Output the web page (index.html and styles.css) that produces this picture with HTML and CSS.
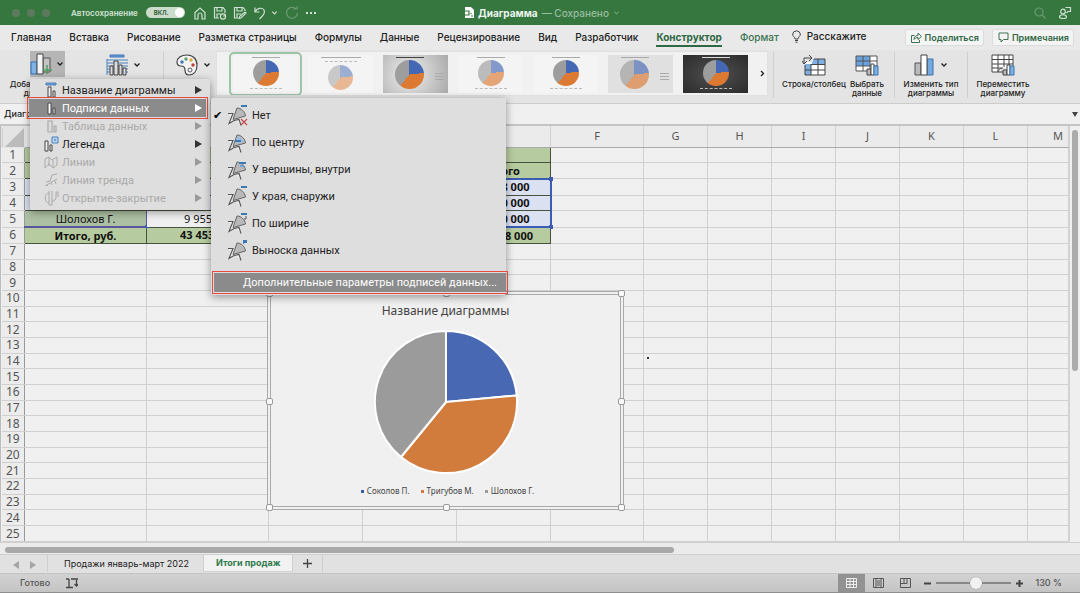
FILE: index.html
```html
<!DOCTYPE html>
<html lang="ru">
<head>
<meta charset="utf-8">
<title>Диаграмма</title>
<link rel="stylesheet" href="styles.css">
</head>
<body>
<svg class="defs" width="0" height="0" aria-hidden="true">
  <symbol id="chev" viewBox="0 0 8 6"><path d="M1.500 1.500 4 4l2.500-2.500" fill="none" stroke="currentColor" stroke-width="1.300"/></symbol>
  <symbol id="wedge" viewBox="0 0 24 24">
    <path d="M2 9.500h5l-2 5-2 5 5-3 5-1 2 6" fill="#eee" stroke="#555" stroke-width="1.100"/>
    <path d="M7 15.500 11 4c4 0 8 3.500 8.500 8Z" fill="#b9b9bb" stroke="#666" stroke-width="1"/>
  </symbol>
  <symbol id="bars" viewBox="0 0 16 16"><path d="M4 3h4v11H4zM10 8h2v6h-2z" fill="none" stroke="currentColor" stroke-width="1.200"/></symbol>
</svg>

<header class="titlebar">
  <div class="lights"><i></i><i></i><i></i></div>
  <span class="autosave">Автосохранение</span>
  <button class="toggle" aria-label="Автосохранение">ВКЛ.<i></i></button>
  <div class="quick">
    <button aria-label="Домой"><svg width="14" height="14" viewBox="0 0 14 14"><path d="M2 6.500 7 2l5 4.500V13H9V9a2 2 0 0 0-4 0v4H2Z"/></svg></button>
    <button aria-label="Сохранить"><svg width="14" height="14" viewBox="0 0 14 14"><path d="M6 12H1.500V1.500H10L12 4v3M4 1.500V5h5V1.500M4 12V8h4"/><circle cx="10" cy="10.500" r="2.600"/><path d="M12 8v2h-2"/></svg></button>
    <button aria-label="Сохранить как"><svg width="14" height="14" viewBox="0 0 14 14"><path d="M5 12H1.500V1.500H10L12 4v1M4 1.500V5h5V1.500M4 12V8h4M6 12.500l1-2.500 5-4 1 1-5 5Z"/></svg></button>
    <button aria-label="Отменить"><svg width="14" height="14" viewBox="0 0 14 14"><path d="M2 1.500V6h4.500M2 6c2-4 7-5 9-2 2 4-2 6-4.500 9"/></svg></button>
    <button class="small" aria-label="Список отмены"><svg width="7" height="6"><use href="#chev"/></svg></button>
    <button class="dim" aria-label="Повторить"><svg width="14" height="14" viewBox="0 0 14 14"><path d="M11 3a5.500 5.500 0 1 0 1.500 4M8.500 3H12V0"/></svg></button>
    <button aria-label="Ещё"><svg width="12" height="4" viewBox="0 0 12 4"><path d="M1 2h2M5 2h2M9 2h2" stroke-width="2"/></svg></button>
  </div>
  <div class="doc">
    <svg width="9" height="11" viewBox="0 0 9 11"><path d="M0 0h6l3 3v8H0z" fill="#fff" stroke="none"/><path d="M0 4h4v4H0M6 6v1M6 9h2" stroke="#35773f" fill="none"/></svg>
    <b>Диаграмма</b><span>— Сохранено</span><svg class="dim" width="7" height="6"><use href="#chev"/></svg>
  </div>
  <div class="right-icons">
    <svg class="dim" width="12" height="12" viewBox="0 0 12 12"><circle cx="5" cy="5" r="4"/><path d="m8 8 3.500 3.500"/></svg>
    <svg width="14" height="14" viewBox="0 0 14 14"><circle cx="5" cy="5.500" r="2.300"/><path d="M1.500 11c0-3 7-3 7 0 0 2-7 2-7 0M7.500 1.500h5v4h-2.500l-1.500 1.500"/></svg>
  </div>
</header>

<nav class="tabs">
  <a href="#">Главная</a><a href="#">Вставка</a><a href="#">Рисование</a><a href="#">Разметка страницы</a><a href="#">Формулы</a><a href="#">Данные</a><a href="#">Рецензирование</a><a href="#">Вид</a><a href="#">Разработчик</a><a href="#" class="active">Конструктор</a><a href="#" class="green">Формат</a>
  <a href="#" class="tell"><svg width="9" height="13" viewBox="0 0 9 13"><path d="M3 9c0-2-2.400-2.500-2.400-5a4 4 0 0 1 7.800 0C8.400 6.500 6 7 6 9ZM3 10.500h3M3.500 12.200h2" fill="none" stroke="#444"/></svg>Расскажите</a>
  <div class="share">
    <button><svg width="11" height="11" viewBox="0 0 11 11"><path d="M3.500 3.500h-3v7h8V8M3 7.500c0-3 2-4 4-4V1l3.500 3.500L7 7.500v-2C5.500 5.500 4 6 3 7.500Z"/></svg>Поделиться</button>
    <button><svg width="11" height="11" viewBox="0 0 11 11"><path d="M1 1h9v6.500H5.500L3 10V7.500H1Z"/></svg>Примечания</button>
  </div>
</nav>

<section class="ribbon">
  <button class="tool add"><span class="pic pressed"><svg width="22" height="23" viewBox="0 0 22 23"><path d="M1 9h6v12H1z" fill="#7fb2e5" stroke="#346fae"/><path d="M13 5h7v14h-7z" fill="#c4c4c4" stroke="#555"/><path d="M7 1h6v20H7z" fill="#f4f4f4" stroke="#444"/><path d="M17 12v9M13 17h9" stroke="#4e9d62" stroke-width="1.500"/></svg><svg width="8" height="6"><use href="#chev"/></svg></span>Добавить элемент<br>диаграммы</button>
  <button class="tool layout" aria-label="Экспресс-макет"><span class="pic"><svg width="22" height="22" viewBox="0 0 22 22"><path d="M4 1h14v2H4z" fill="#6ea3dc" stroke="#3b73b5"/><path d="M1 5v16M1 6h21M1 9h21M1 12h21M1 15h21M1 18h21" stroke="#4b82bd"/><path d="M4 12h3v9H4zM8 7h4v14H8zM13 11h3v10h-3zM17 14h3v7h-3z" fill="#ddd" stroke="#444"/></svg><svg width="8" height="6"><use href="#chev"/></svg></span></button>
  <hr>
  <button class="tool colors" aria-label="Изменить цвета"><span class="pic"><svg width="22" height="22" viewBox="0 0 22 22"><path d="M11 1C5 1 1 4 1 8c0 3 2 4 4 4 3 0 4 1 4 4 0 3 1 5 4 5 5 0 8-4 8-10C21 5 17 1 11 1Z" fill="#f3f3f3" stroke="#444" stroke-width="1.200"/><circle cx="6" cy="8" r="1.700" fill="#3f75b5"/><circle cx="10" cy="5" r="1.700" fill="#58a36b"/><circle cx="15" cy="6" r="1.700" fill="#e0a93b"/><circle cx="17" cy="11" r="1.700" fill="#c33b3b"/><circle cx="14" cy="16" r="2" fill="#fff" stroke="#555"/></svg><svg width="8" height="6"><use href="#chev"/></svg></span></button>
  <div class="gallery">
    <button class="thumb chosen" aria-label="Стиль 1"><i class="cap"></i><i class="pie"></i><i class="key"></i></button>
    <button class="thumb pale low" aria-label="Стиль 2"><i class="cap wide"></i><i class="key"></i><i class="pie"></i></button>
    <button class="thumb grad side" aria-label="Стиль 3"><i class="cap"></i><i class="pie big"></i></button>
    <button class="thumb soft" aria-label="Стиль 4"><i class="cap"></i><i class="pie"></i><i class="key"></i></button>
    <button class="thumb" aria-label="Стиль 5"><i class="cap"></i><i class="pie"></i><i class="key"></i></button>
    <button class="thumb soft shade side" aria-label="Стиль 6"><i class="cap"></i><i class="pie big"></i></button>
    <button class="thumb dark" aria-label="Стиль 7"><i class="cap"></i><i class="pie"></i><i class="key"></i></button>
    <button class="more" aria-label="Далее"><svg width="5" height="7" viewBox="0 0 5 7"><path d="m1 1 2.500 2.500L1 6" fill="none" stroke="#222" stroke-width="1.300"/></svg></button>
  </div>
  <hr class="after-gallery">
  <button class="tool swap"><span class="pic"><svg width="24" height="22" viewBox="0 0 24 22"><path d="M3 5h20v16H3z" fill="#fff"/><path d="M10 5h13v5H10zM3 10h6v11H3z" fill="#7eb0e3"/><path d="M12 5h11v16H3V11M3 16h20M9 10v11M16 5v16M9 10.500h14" fill="none" stroke="#444"/><path d="M0 0h11v8H0z" fill="#e4e4e4"/><path d="M2 9V4h8M7 1l3 3-3 3M0 7l2 3 3-3" fill="none" stroke="#444"/></svg></span>Строка/столбец</button>
  <button class="tool pick"><span class="pic"><svg width="24" height="22" viewBox="0 0 24 22"><path d="M1 2h21v15H1z" fill="#fff"/><path d="M1 2h14v10H1z" fill="#69a2df"/><path d="M1 2h21v15H1zM1 7h21M1 12h21M8 2v15M15 2v15" fill="none" stroke="#555"/><path d="M12 15h4v6h-4z" fill="#bbb" stroke="#444"/><path d="M16 10h3v11h-3z" fill="#fff" stroke="#444"/><path d="M19 12h4v9h-4z" fill="#7eb0e3" stroke="#3972ae"/></svg></span>Выбрать<br>данные</button>
  <hr>
  <button class="tool type"><span class="pic"><svg width="21" height="22" viewBox="0 0 21 22"><path d="M1 9h6v12H1z" fill="#bbb" stroke="#555"/><path d="M13 5h6v16h-6z" fill="#76aae0" stroke="#3972ae"/><path d="M7 1h6v20H7z" fill="#fff" stroke="#444"/></svg><svg width="8" height="6"><use href="#chev"/></svg></span>Изменить тип<br>диаграммы</button>
  <hr>
  <button class="tool move"><span class="pic"><svg width="24" height="22" viewBox="0 0 24 22"><path d="M1 1h21v13H12l-4 4H1z" fill="#fff"/><path d="M12 18H1V1h21v11M1 5.500h21M1 10h21M1 14h11M7 1v17M13 1v12M18 1v11M7 18c1-3 3-4 4-3" fill="none" stroke="#444"/><path d="M12 16h4v5h-4z" fill="#bbb" stroke="#444"/><path d="M16 11h3v10h-3z" fill="#fff" stroke="#444"/><path d="M19 12h4v9h-4z" fill="#7eb0e3" stroke="#3972ae"/></svg></span>Переместить<br>диаграмму</button>
</section>

<div class="formula"><span>Диагр</span><i></i></div>

<main class="sheet">
  <table id="grid"></table>
  <div class="vscroll"><i></i></div>
  <figure class="chart">
    <i class="h n w"></i><i class="h n c"></i><i class="h n e"></i><i class="h m w"></i><i class="h m e"></i><i class="h s w"></i><i class="h s c"></i><i class="h s e"></i>
    <figcaption>Название диаграммы</figcaption>
    <svg width="144" height="144" viewBox="-72 -72 144 144" stroke="#fff" stroke-width="2" stroke-linejoin="round">
      <path d="M0 0V-71A71 71 0 0 1 70.700-6.500Z" fill="#4868b3"/>
      <path d="M0 0 70.700-6.500A71 71 0 0 1-45 55Z" fill="#d17b3c"/>
      <path d="M0 0-45 55A71 71 0 0 1 0-71Z" fill="#9b9b9b"/>
    </svg>
    <ul><li class="k1">Соколов П.</li><li class="k2">Тригубов М.</li><li class="k3">Шолохов Г.</li></ul>
  </figure>
  <i class="speck"></i>
</main>

<div class="hscroll"><i></i></div>
<nav class="sheets">
  <button class="arrow prev" aria-label="Назад"></button><button class="arrow next" aria-label="Вперёд"></button>
  <button class="stab">Продажи январь-март 2022</button>
  <button class="stab on">Итоги продаж</button>
  <button class="plus" aria-label="Добавить лист"><svg width="9" height="9" viewBox="0 0 9 9"><path d="M4.500 0v9M0 4.500h9" stroke="#444" stroke-width="1.300"/></svg></button>
</nav>
<footer class="status">
  <span class="ready">Готово</span>
  <svg width="12" height="11" viewBox="0 0 12 11"><path d="M0 1h3M5 1h7M3 1v8M0 9.500h7M10.500 2v5M8.500 6l2 2 2-2" fill="none" stroke="#444" stroke-width="1.300"/></svg>
  <div class="views">
    <button class="on" aria-label="Обычный"><svg width="11" height="10" viewBox="0 0 11 10"><path d="M.5.5h10v9H.5zM.5 3.500h10M.5 6.500h10M4 .5v9M7.500.5v9"/></svg></button>
    <button aria-label="Разметка"><svg width="11" height="10" viewBox="0 0 11 10"><path d="M.5.5h10v9H.5zM3 .5v9M8 .5v9M4 3h3M4 5h3M4 7h3"/></svg></button>
    <button aria-label="Страничный"><svg width="11" height="10" viewBox="0 0 11 10"><path d="M.5.5h10v9H.5zM.5 5.500H7V.5M4 .5v5"/></svg></button>
  </div>
  <button class="zoom" aria-label="Уменьшить"><svg width="7" height="7" viewBox="0 0 7 7"><path d="M0 3.500h7"/></svg></button>
  <input type="range" min="0" max="100" value="54" aria-label="Масштаб">
  <button class="zoom" aria-label="Увеличить"><svg width="7" height="7" viewBox="0 0 7 7"><path d="M0 3.500h7M3.500 0v7"/></svg></button>
  <span class="percent">130 %</span>
</footer>

<div class="menu main-menu" role="menu">
  <button role="menuitem"><svg width="16" height="16" viewBox="0 0 16 16"><path d="M2 1h10v2H2z" fill="#75a5dc" stroke="#4d7fb9"/><path d="M4 5h3v10H4zM9 9h2v6H9z" fill="#eee" stroke="#444"/></svg>Название диаграммы</button>
  <button role="menuitem" class="hot"><svg width="16" height="16" viewBox="0 0 16 16"><path d="M4 3h3v11H4z" fill="#fff" stroke="#444"/><path d="M9 8h2v6H9z" fill="#eee" stroke="#444"/></svg>Подписи данных</button>
  <button role="menuitem" disabled><svg width="16" height="16"><use href="#bars"/></svg>Таблица данных</button>
  <button role="menuitem"><svg width="16" height="16" viewBox="0 0 16 16"><path d="M1 5h3v10H1zM6 9h2v6H6z" fill="#eee" stroke="#444"/><path d="M8 1h6v6H8z" fill="#b7d3ef" stroke="#4a82bd"/><path d="M10 4h2" stroke="#346fae"/></svg>Легенда</button>
  <button role="menuitem" disabled><svg width="16" height="16" viewBox="0 0 16 16"><path d="M1 14V5l4-2 3 3 5-3v8l-4 3-4-4-4 4M5 3v9M9 6v7" fill="none" stroke="currentColor"/></svg>Линии</button>
  <button role="menuitem" disabled><svg width="16" height="16" viewBox="0 0 16 16"><path d="M1 14 13 7M2 10l4-1 2-6 5-1M3 13l1 1M7 11l1 2M11 9l1 3" fill="none" stroke="currentColor"/></svg>Линия тренда</button>
  <button role="menuitem" disabled><svg width="16" height="16" viewBox="0 0 16 16"><path d="M5 3C0 3 0 13 5 13M5 1v14h3V1M8 12l4-3V2h2v5" fill="none" stroke="currentColor"/></svg>Открытие-закрытие</button>
</div>

<div class="menu sub-menu" role="menu">
  <button role="menuitem" class="checked"><svg width="24" height="24"><use href="#wedge"/><path d="M15 2h6" stroke="#3c79b3" stroke-width="2"/><path d="m15 15 6 6m0-6-6 6" stroke="#c64a50" stroke-width="1.200"/></svg>Нет</button>
  <button role="menuitem"><svg width="24" height="24"><use href="#wedge"/><path d="m9 12 2-6c4 0 6 2 7 5Z" fill="#9dc0e2"/><path d="M9 10h6" stroke="#3c79b3" stroke-width="2"/></svg>По центру</button>
  <button role="menuitem"><svg width="24" height="24"><use href="#wedge"/><path d="M13 5h7" stroke="#3c79b3" stroke-width="2"/><path d="M14 8h4" stroke="#6e9ecb" stroke-width="2"/></svg>У вершины, внутри</button>
  <button role="menuitem"><svg width="24" height="24"><use href="#wedge"/><path d="M15 2h6" stroke="#3c79b3" stroke-width="2"/></svg>У края, снаружи</button>
  <button role="menuitem"><svg width="24" height="24"><use href="#wedge"/><path d="M15 2h6" stroke="#3c79b3" stroke-width="2"/><path d="M20 4v3h-2" fill="none" stroke="#555"/></svg>По ширине</button>
  <button role="menuitem"><svg width="24" height="24"><use href="#wedge"/><path d="M17 1h4v3h-2l-2 1Z" fill="#3c79b3"/></svg>Выноска данных</button>
  <button role="menuitem" class="hot">Дополнительные параметры подписей данных...</button>
</div>
<script src="grid.js"></script>
</body>
</html>
```

FILE: grid.js
```js
const columns = ["", "", "", "", "", "F", "G", "H", "I", "J", "K", "L", "M"];
const cells = {
  "2-4": "Итого", "3-4": "8 000", "4-4": "0 000", "5-4": "0 000", "6-4": "8 000",
  "5-0": "Шолохов Г.", "5-1": "9 955", "6-0": "Итого, руб.", "6-1": "43 453"
};
const widths = [23, 122, 122, 94, 94, 94, 93, 64, 64, 64, 64, 64, 64];
let html = "<colgroup>" + widths.map(w => `<col style="width:${w}px">`).join("") + "<col></colgroup>";
html += "<thead><tr><th class='corner'></th>" + columns.map(c => `<th>${c}</th>`).join("") + "</tr></thead><tbody>";
for (let r = 1; r <= 25; r++) {
  html += `<tr class="r${r}"><th>${r}</th>`;
  columns.forEach((_, c) => {
    const data = r <= 6 && c <= 4 ? ` data c${c}` : "";
    html += `<td class="cell${data}">${cells[r + "-" + c] || ""}</td>`;
  });
  html += "</tr>";
}
document.getElementById("grid").innerHTML = html + "</tbody>";
for (const [selector, name] of [[".r5 .c0", "bottom"], [".r5 .c4", "bottom"], [".r3 .c4", "top"]]) {
  const mark = document.createElement("i");
  mark.className = "mark " + name;
  document.querySelector(selector).append(mark);
}
```

FILE: styles.css
```css
* { box-sizing: border-box; }
body {
  margin: 0;
  min-height: 100vh;
  display: flex;
  flex-direction: column;
  position: relative;
  overflow: hidden;
  background: #e6e6e6;
  color: #222;
  font: 500 10px/12px Inter, "Liberation Sans", sans-serif;
}
button { font: inherit; color: inherit; border: 0; background: none; padding: 0; margin: 0; }
a { color: inherit; text-decoration: none; }
svg { flex: none; }
.defs { position: absolute; }

.titlebar {
  height: 25px;
  background: #35773f;
  color: #d3e2d5;
  display: flex;
  align-items: center;
  padding: 0 8px 0 12px;
  position: relative;
}
.titlebar svg { fill: none; stroke: #cfe0d2; stroke-width: 1.2; }
.titlebar .dim { opacity: .35; }
.lights { display: flex; gap: 7px; }
.lights i { width: 8px; height: 8px; border-radius: 50%; background: #5d7a61; }
.autosave { margin-left: 21px; font-size: 8px; font-weight: 600; }
.toggle {
  width: 39px; height: 11px; margin-left: 8px; padding: 0 1px 0 8px;
  display: flex; align-items: center; justify-content: space-between;
  border-radius: 6px; background: #cbdccd; color: #35603c; font-size: 6px; font-weight: 700;
}
.toggle i { width: 9px; height: 9px; border-radius: 50%; background: #fff; }
.quick { display: flex; align-items: center; gap: 6px; margin-left: 8px; }
.quick button { display: flex; }
.quick .small { margin: 0 1px 0 -2px; }
.doc { display: flex; align-items: center; gap: 4px; position: absolute; left: 0; right: 0; padding-left: 5px; justify-content: center; pointer-events: none; }
.doc b { color: #eef5ef; font-weight: 700; }
.doc span { color: #9bbd9f; }
.right-icons { margin-left: auto; display: flex; gap: 12px; align-items: center; }

.tabs { height: 25px; display: flex; gap: 18px; padding: 0 6px 0 11px; align-items: center; background: #e9e9e9; white-space: nowrap; }
.tabs > a { padding: 2px 0 2px; border-bottom: 2px solid transparent; }
.tabs .active { color: #2f6844; font-weight: 700; border-color: #2f6844; }
.tabs .green { color: #3c7350; }
.tabs .tell { display: flex; gap: 6px; margin-left: -5px; }
.share { margin-left: auto; display: flex; gap: 8px; }
.share button { height: 17px; display: flex; align-items: center; gap: 3px; padding: 0 4px 0 5px; background: #f4f4f4; border: 1px solid #dcdcdc; border-radius: 2px; color: #2f6844; font-size: 9px; font-weight: 600; }
.share svg { fill: none; stroke: #3c7350; }

.ribbon { height: 53px; display: flex; align-items: flex-start; padding-top: 1px; background: #e4e4e4; }
.ribbon hr { width: 1px; height: 46px; margin: 1px 0 0; border: 0; background: #cfcfcf; }
.ribbon .after-gallery { margin-left: 5px; }
.tool { text-align: center; font-size: 8px; line-height: 9px; white-space: nowrap; }
.pic { display: flex; justify-content: center; align-items: center; gap: 5px; height: 26px; margin: 0 auto 3px; padding-top: 2px; }
.pressed { width: 35px; background: #b5b5b5; padding: 0; gap: 4px; }
.add { width: 87px; padding-left: 7px; }
.layout { width: 76px; padding-right: 4px; }
.colors { width: 52px; padding-left: 6px; }
.swap { width: 73px; padding-left: 7px; }
.pick { width: 47px; padding-right: 7px; }
.type { width: 72px; }
.move { width: 70px; }
.gallery { flex: 1; max-width: 552px; min-width: 0; display: flex; align-items: center; gap: 10px; height: 45px; padding-left: 16px; background: #f1f1f1; border: 1px solid #e0e0e0; overflow: hidden; }
.thumb { flex: none; width: 65px; height: 38px; display: flex; flex-direction: column; align-items: center; gap: 2px; padding-top: 2px; position: relative; background: #f4f4f4; }
.chosen { height: 36px; padding-top: 1px; outline: 2px solid #9cc4a7; outline-offset: 2px; border-radius: 1px; }
.cap { width: 28px; height: 1px; background: #aaa; }
.cap.wide { width: 40px; }
.key { width: 32px; border-top: 1px dashed #bbb; }
.pie { width: 26px; height: 26px; border-radius: 50%; background: conic-gradient(#4568b4 0 84deg, #dc7a34 84deg 219deg, #9d9d9d 219deg); }
.pie.big { width: 29px; height: 29px; }
.pale .pie { opacity: .5; width: 25px; height: 25px; }
.soft .pie { opacity: .65; }
.low { gap: 3px; }
.grad { background: radial-gradient(circle at 40% 50%, #eee, #aaa); }
.grad .cap { background: #444; }
.shade { background: #e0e0e0; }
.side { padding-right: 12px; }
.side::after { content: ""; position: absolute; right: 4px; top: 18px; width: 9px; height: 7px; background: repeating-linear-gradient(#aaa 0 1px, transparent 1px 3px); }
.dark { background: radial-gradient(#505050, #2b2b2b); }
.dark .cap { background: #ddd; }
.more { margin-left: -1px; padding: 3px; display: flex; }

.formula { height: 23px; display: flex; align-items: center; justify-content: space-between; padding: 0 2px 0 4px; background: #f0f0f0; border-top: 1px solid #cdcdcd; border-bottom: 2px solid #c4c4c4; }
.formula span { font-size: 9px; }
.formula i { border: 3px solid transparent; border-top: 5px solid #444; border-bottom: 0; }

.sheet { flex: 1; display: flex; position: relative; background: #f0f0f0; border-left: 1px solid #bbb; }
#grid { flex: 1; width: 0; table-layout: fixed; border-collapse: collapse; font: 12px/12px "Noto Sans", sans-serif; }
#grid th, #grid td { padding: 0; border: 1px solid #d0d0d0; white-space: nowrap; overflow: hidden; }
#grid thead th { height: 21px; background: #ebebeb; color: #555; font-weight: 400; font-size: 11px; border-top: 0; border-bottom-color: #aaa; }
#grid thead th:last-child { padding-left: 20px; }
#grid .corner { background: linear-gradient(135deg, #e4e4e4 55%, #bcbcbc 55%); border-color: #e4e4e4; }
#grid tbody th { font-weight: 400; color: #555; background: #ececec; border-left: 0; border-right-color: #999; }
#grid .data { background: #b7cba0; border-color: #47513d; text-align: center; font-weight: 700; font-size: 11px; color: #111; position: relative; overflow: visible; }
#grid .r5 .data, #grid .r4 .data, #grid .r3 .data { background: #dce1f1; }
#grid .r5 .c1 { background: #efefef; font-weight: 400; }
#grid .r5 .c0 { background: #adc0a4; font-weight: 400; border-bottom: 2px solid #5b579c; border-right-color: #5b579c; }
#grid .c1 { text-align: left; padding-left: 37px; }
#grid .r6 .c1 { padding-left: 33px; }
#grid .r3 .c4, #grid .r4 .c4, #grid .r5 .c4 { text-align: right; padding-right: 20px; border-right: 2px solid #3c5cb4; }
#grid .r6 .c4 { text-align: right; padding-right: 17px; }
#grid .r3 .c4 { border-top: 2px solid #3c5cb4; }
#grid .r5 .c4 { border-bottom: 2px solid #3c5cb4; }
.mark { position: absolute; right: -3px; width: 4px; height: 4px; background: #3c5cb4; }
.mark.top { top: -3px; }
.mark.bottom { bottom: -3px; }
.vscroll { width: 11px; padding: 4px 2px; border-left: 1px solid #d4d4d4; background: #efefef; }
.vscroll i { display: block; height: 59%; border-radius: 4px; background: #ababab; }
.speck { position: absolute; left: 646px; top: 231px; width: 2px; height: 2px; background: #333; }

.chart {
  position: absolute; left: 266px; top: 165px; width: 357px; margin: 0;
  display: flex; flex-direction: column; align-items: center;
  padding: 8px 0 9px; background: #f0f0f0; border: 4px double #aaa;
  font-family: "Noto Sans", sans-serif; color: #444;
}
.chart figcaption { font-size: 12px; line-height: 16px; margin-bottom: 11px; font-weight: 400; }
.chart ul { display: flex; gap: 11px; list-style: none; margin: 11px 0 0; padding: 0 0 0 4px; font-size: 8px; line-height: 12px; font-weight: 400; }
.chart li { display: flex; align-items: center; gap: 3px; }
.chart li::before { content: ""; width: 3px; height: 3px; background: #9b9b9b; }
.chart .k1::before { background: #3c5aa9; }
.chart .k2::before { background: #d17b3c; }
.h { position: absolute; width: 7px; height: 7px; border: 1px solid #999; border-radius: 2px; background: #fafafa; }
.h.n { top: -5px; } .h.m { top: calc(50% - 3px); } .h.s { bottom: -5px; }
.h.w { left: -5px; } .h.c { left: calc(50% - 3px); } .h.e { right: -5px; }

.hscroll { height: 13px; padding: 4px 5px; background: #ebebeb; border-top: 1px solid #d0d0d0; border-bottom: 1px solid #cfcfcf; }
.hscroll i { display: block; width: 62.5%; height: 6px; border-radius: 3px; background: #a9a9a9; }
.sheets { height: 19px; display: flex; align-items: flex-start; padding-left: 13px; background: #e1e1e1; border-bottom: 1px solid #c4c4c4; font-size: 9px; }
.arrow { width: 6px; height: 7px; margin: 6px 11px 0 0; border: solid transparent; border-width: 4px 0; }
.prev { border-right: 6px solid #a5a5a5; }
.next { border-left: 6px solid #a5a5a5; }
.stab { height: 17px; padding: 0 14px 0 16px; font-weight: 400; white-space: nowrap; border-left: 1px solid #cfcfcf; }
.stab.on { padding: 0 12px; background: #f2f2f2; color: #2f7a4c; font-weight: 700; border: 1px solid #d0d0d0; border-top: 0; }
.plus { width: 30px; height: 17px; border-right: 1px solid #cfcfcf; display: flex; align-items: center; justify-content: center; }
.status { height: 19px; display: flex; align-items: center; padding: 0 18px 0 20px; background: linear-gradient(#d2d2d2, #c4c4c4); border-bottom: 1px solid #8e8e8e; font-size: 9px; color: #555; }
.ready { margin-right: 16px; }
.views { margin-left: auto; display: flex; align-self: stretch; }
.views button { width: 27px; display: flex; align-items: center; justify-content: center; }
.views .on { background: #929292; }
.views svg { fill: none; stroke: #555; }
.views .on svg { stroke: #eee; }
.zoom { display: flex; margin: 0 5px; }
.zoom svg { stroke: #444; stroke-width: 2; }
.status input { appearance: none; width: 75px; height: 13px; margin: 0; background: linear-gradient(#888, #888) center / 100% 2px no-repeat; }
.status input::-webkit-slider-thumb { appearance: none; width: 12px; height: 12px; border-radius: 50%; background: #f2f2f2; box-shadow: 0 0 1px #777; }
.percent { margin-left: 7px; }

.menu { position: absolute; display: flex; flex-direction: column; background: #dedede; box-shadow: 0 2px 8px rgba(0, 0, 0, .4); font: 400 11px/13px Roboto, sans-serif; border-radius: 2px; }
.menu button { display: flex; align-items: center; text-align: left; white-space: nowrap; }
.main-menu { left: 30px; top: 79px; width: 180px; padding: 2px 0 3px; }
.main-menu button { height: 18px; padding: 0 8px 0 14px; gap: 2px; }
.main-menu button::after { content: ""; margin-left: auto; border: 4px solid transparent; border-left: 7px solid #333; border-right: 0; }
.menu button:disabled { color: #aaa; }
.main-menu button:disabled::after { border-left-color: #999; }
.menu .hot { background: #8b8b8b; color: #fff; outline: 1px solid #e8483f; outline-offset: 1px; }
.main-menu .hot { margin: 0 4px 0 -1px; padding: 0 4px 0 15px; }
.main-menu .hot::after { border-left-color: #fff; }
.sub-menu { left: 211px; top: 98px; width: 295px; padding: 4px 0 3px; }
.sub-menu button { height: 27px; padding-left: 15px; gap: 2px; position: relative; }
.sub-menu .hot { height: 19px; margin: 9px 0 0 3px; padding-left: 29px; }
.sub-menu .checked::before { content: "✔"; position: absolute; left: 2px; font: 11px/12px "DejaVu Sans", sans-serif; color: #000; }
```
